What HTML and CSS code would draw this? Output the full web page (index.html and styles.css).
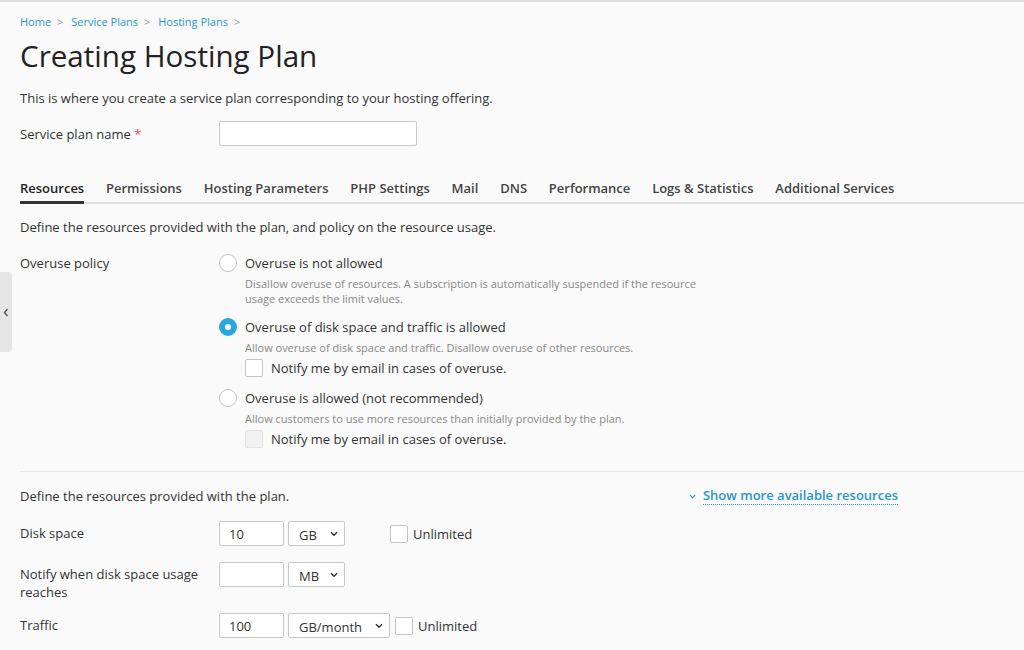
FILE: index.html
```html
<!DOCTYPE html>
<html>
<head>
<meta charset="utf-8">
<title>Creating Hosting Plan</title>
<link rel="stylesheet" href="styles.css">
</head>
<body>

<a class="sidebar-toggle" href="#">
  <svg width="6" height="9" viewBox="0 0 6 9"><path d="M4.5 1 1.5 4.5 4.5 8" fill="none" stroke="#555" stroke-width="1.4"/></svg>
</a>

<div class="page">
  <div class="breadcrumbs">
    <a href="#">Home</a><span class="sep">&gt;</span>
    <a href="#">Service Plans</a><span class="sep">&gt;</span>
    <a href="#">Hosting Plans</a><span class="sep">&gt;</span>
  </div>

  <h1>Creating Hosting Plan</h1>
  <p class="intro">This is where you create a service plan corresponding to your hosting offering.</p>

  <div class="field name-field">
    <label class="field-label" for="plan-name">Service plan name <span class="required">*</span></label>
    <input type="text" class="text-input name-input" id="plan-name">
  </div>

  <ul class="tabs">
    <li class="active">Resources</li>
    <li>Permissions</li>
    <li>Hosting Parameters</li>
    <li>PHP Settings</li>
    <li>Mail</li>
    <li>DNS</li>
    <li>Performance</li>
    <li>Logs &amp; Statistics</li>
    <li>Additional Services</li>
  </ul>

  <section class="policy">
    <p class="section-hint">Define the resources provided with the plan, and policy on the resource usage.</p>

    <div class="field policy-field">
      <div class="field-label">Overuse policy</div>
      <div class="options">
        <div class="option">
          <input type="radio" name="overuse" id="ov-none">
          <div class="option-body">
            <label for="ov-none">Overuse is not allowed</label>
            <div class="hint">Disallow overuse of resources. A subscription is automatically suspended if the resource<br>usage exceeds the limit values.</div>
          </div>
        </div>
        <div class="option">
          <input type="radio" name="overuse" id="ov-some" checked>
          <div class="option-body">
            <label for="ov-some">Overuse of disk space and traffic is allowed</label>
            <div class="hint">Allow overuse of disk space and traffic. Disallow overuse of other resources.</div>
            <label class="check"><input type="checkbox"> Notify me by email in cases of overuse.</label>
          </div>
        </div>
        <div class="option">
          <input type="radio" name="overuse" id="ov-all">
          <div class="option-body">
            <label for="ov-all">Overuse is allowed (not recommended)</label>
            <div class="hint">Allow customers to use more resources than initially provided by the plan.</div>
            <label class="check"><input type="checkbox" disabled> Notify me by email in cases of overuse.</label>
          </div>
        </div>
      </div>
    </div>
  </section>

  <section class="limits">
    <div class="limits-head">
      <span>Define the resources provided with the plan.</span>
      <a href="#" class="more-link">
        <svg width="7" height="5" viewBox="0 0 7 5"><path d="M.8.8 3.5 3.6 6.2.8" fill="none" stroke="#2b97cb" stroke-width="1.1"/></svg>
        <span>Show more available resources</span>
      </a>
    </div>

    <div class="field limit-row">
      <label class="field-label" for="disk">Disk space</label>
      <div class="limit-controls">
        <input type="text" class="text-input num-input" id="disk" value="10">
        <div class="unit-cell">
          <div class="select-wrap">
            <select class="unit-select"><option>GB</option></select>
            <svg class="caret" width="8" height="6" viewBox="0 0 8 6"><path d="M1 1.2 4 4.2 7 1.2" fill="none" stroke="#333" stroke-width="1.5"/></svg>
          </div>
        </div>
        <label class="check"><input type="checkbox"> Unlimited</label>
      </div>
    </div>

    <div class="field limit-row">
      <label class="field-label" for="notify">Notify when disk space usage reaches</label>
      <div class="limit-controls">
        <input type="text" class="text-input num-input" id="notify">
        <div class="unit-cell">
          <div class="select-wrap">
            <select class="unit-select"><option>MB</option></select>
            <svg class="caret" width="8" height="6" viewBox="0 0 8 6"><path d="M1 1.2 4 4.2 7 1.2" fill="none" stroke="#333" stroke-width="1.5"/></svg>
          </div>
        </div>
      </div>
    </div>

    <div class="field limit-row">
      <label class="field-label" for="traffic">Traffic</label>
      <div class="limit-controls">
        <input type="text" class="text-input num-input" id="traffic" value="100">
        <div class="unit-cell">
          <div class="select-wrap">
            <select class="unit-select wide"><option>GB/month</option></select>
            <svg class="caret" width="8" height="6" viewBox="0 0 8 6"><path d="M1 1.2 4 4.2 7 1.2" fill="none" stroke="#333" stroke-width="1.5"/></svg>
          </div>
        </div>
        <label class="check"><input type="checkbox"> Unlimited</label>
      </div>
    </div>
  </section>
</div>

</body>
</html>
```

FILE: styles.css
```css
html, body { margin: 0; padding: 0; }
body { background: #fafafa; color: #333; font-family: "Open Sans", "Liberation Sans", sans-serif; font-size: 13px; line-height: 18px; border-top: 2px solid #dedede; position: relative; }
a { color: #2996cc; text-decoration: none; }
p { margin: 0; }

.sidebar-toggle { position: absolute; left: 0; top: 270px; width: 12px; height: 80px; background: #e6e6e6; border-radius: 0 3px 3px 0; display: flex; align-items: center; justify-content: center; }

.page { padding-left: 20px; }

.breadcrumbs { font-size: 11px; line-height: 16px; padding-top: 12px; }
.breadcrumbs .sep { color: #999; margin: 0 5px 0 6px; font-size: 11px; }

h1 { font-size: 29.6px; font-weight: 400; line-height: 36px; margin: 8px 0 15px; color: #222; }

.field { display: grid; grid-template-columns: 199px auto; align-items: start; }
.required { color: #e05050; }

.name-field { margin-top: 14px; align-items: center; }
.text-input { box-sizing: border-box; height: 25px; border: 1px solid #c8c8c8; border-radius: 2px; background: #fff; font: inherit; color: #333; padding: 0 9px; margin: 0; }
.name-input { width: 198px; }

.tabs { list-style: none; margin: 33px 0 0; padding: 0; display: flex; gap: 21.8px; border-bottom: 2px solid #e0e0e0; }
.tabs li { font-weight: 600; color: #444; padding-bottom: 4px; margin-bottom: -2px; border-bottom: 3px solid transparent; }
.tabs li.active { color: #222; border-bottom-color: #333; }

.policy { padding: 14px 0 23px; border-bottom: 1px solid #e6e6e6; }
.policy-field { margin-top: 18px; }
.options { display: flex; flex-direction: column; gap: 12px; }
.option { display: flex; gap: 8px; }
.option-body { display: flex; flex-direction: column; }
.hint { font-size: 11px; line-height: 15px; color: #888; margin-top: 4px; }
.option .check { margin-top: 4px; }

input[type=radio] { appearance: none; -webkit-appearance: none; box-sizing: border-box; width: 18px; height: 18px; margin: 0; border: 1px solid #c4c4c4; border-radius: 50%; background: #fff; flex: none; }
input[type=radio]:checked { border: 6px solid #28a7df; }

.check { display: flex; align-items: center; gap: 8px; }
input[type=checkbox] { appearance: none; -webkit-appearance: none; box-sizing: border-box; width: 18px; height: 18px; margin: 0; border: 1px solid #c4c4c4; border-radius: 2px; background: #fff; flex: none; }
input[type=checkbox]:disabled { background: #f2f2f2; border-color: #e2e2e2; }

.limits { padding-top: 15px; }
.limits-head { width: 878px; display: flex; justify-content: space-between; align-items: center; margin-bottom: 16px; }
.more-link { display: flex; align-items: center; gap: 7px; font-weight: 600; color: #2996cc; }
.more-link span { border-bottom: 1px dotted #2996cc; line-height: 17px; }

.limit-row { margin-bottom: 12px; min-height: 29px; }
.limit-row .field-label { padding-top: 4px; line-height: 17.5px; padding-right: 20px; }
.limit-controls { display: flex; align-items: center; gap: 4px; }
.num-input { width: 65px; }
.unit-cell { min-width: 97px; }
.select-wrap { position: relative; display: inline-block; }
.unit-select { appearance: none; -webkit-appearance: none; box-sizing: border-box; height: 25px; width: 57px; border: 1px solid #c8c8c8; border-radius: 2px; background: #fff; font: inherit; color: #333; padding: 2px 0 0 10px; margin: 0; }
.unit-select.wide { width: 102px; }
.caret { position: absolute; right: 7px; top: 10px; pointer-events: none; }
.limit-controls .check { gap: 5px; margin-left: 1px; }
```
